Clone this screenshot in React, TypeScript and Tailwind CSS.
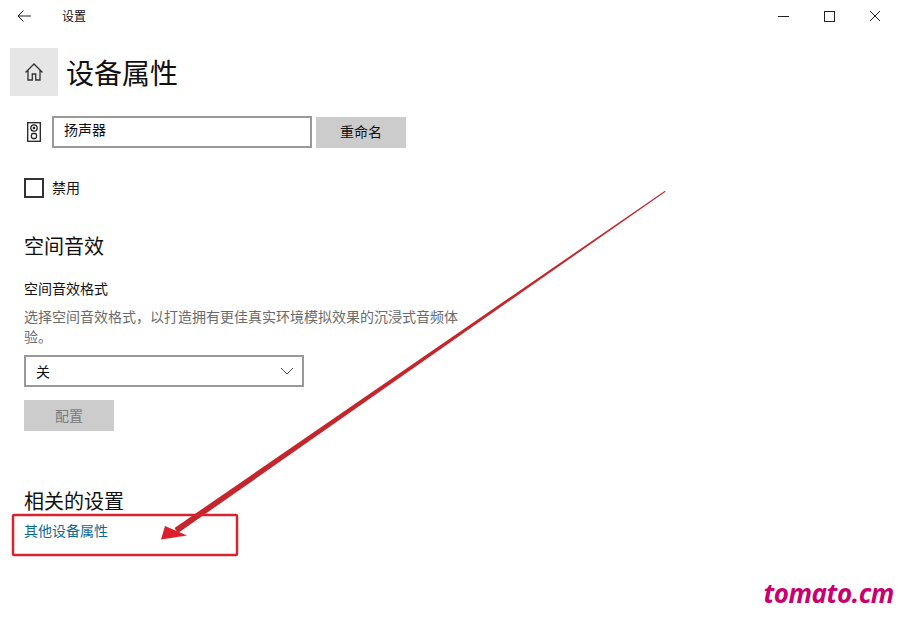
function BackIcon() {
  return (
    <svg width="16" height="16" viewBox="0 0 16 16" fill="none" stroke="#222" strokeWidth="1">
      <path d="M2 8h13M7.500 2.500 2 8l5.500 5.500" />
    </svg>
  )
}

function HomeIcon() {
  return (
    <svg width="20" height="20" viewBox="0 0 20 20" fill="none" stroke="#333" strokeWidth="1.300">
      <path d="M1.500 10.500 10 2l8.500 8.500M4 8v10h4.300v-6h3.400v6H16V8" />
    </svg>
  )
}

function SpeakerIcon() {
  return (
    <svg width="14" height="20" viewBox="0 0 14 20" fill="none" stroke="#222" strokeWidth="1.300">
      <rect x="0.700" y="0.700" width="12.600" height="18.600" />
      <circle cx="7" cy="6" r="3.200" />
      <circle cx="7" cy="6" r="0.700" />
      <rect x="4.500" y="11.500" width="5" height="5" rx="1.500" />
    </svg>
  )
}

function Annotation() {
  return (
    <svg className="absolute inset-0" width="898" height="620" viewBox="0 0 898 620" fill="none">
      <path d="M665.500 191.700 178 533l-3.500-5L665 190.800Z" fill="#c4262c" />
      <path d="M161 539.500 165 526l22 9.500Z" fill="#dc1f2b" />
      <rect x="13" y="515" width="224" height="40" rx="1" stroke="#d8242f" strokeWidth="2.500" />
    </svg>
  )
}

function App() {
  return (
    <div className="relative w-[898px] h-[620px] overflow-hidden bg-white text-[#111] font-['Noto_Sans_CJK_SC','Noto_Sans',sans-serif]">
      {/* title bar */}
      <div className="flex items-center h-8 pl-4">
        <BackIcon />
        <span className="ml-[30px] text-xs">设置</span>
        <div className="ml-auto flex items-center">
          <div className="w-[46px] flex justify-center">
            <div className="w-[11px] h-px bg-[#222]" />
          </div>
          <div className="w-[46px] flex justify-center">
            <div className="w-[11px] h-[11px] border border-[#222]" />
          </div>
          <div className="w-[46px] flex justify-center">
            <svg width="12" height="12" viewBox="0 0 12 12" stroke="#222" strokeWidth="1">
              <path d="M1 1l10 10M11 1 1 11" />
            </svg>
          </div>
        </div>
      </div>

      {/* page header */}
      <div className="flex items-center mt-4 ml-2.5">
        <div className="flex items-center justify-center w-12 h-12 bg-[#e6e6e6]">
          <HomeIcon />
        </div>
        <h1 className="ml-2 text-[28px] leading-none">设备属性</h1>
      </div>

      {/* rename */}
      <div className="flex items-center mt-5 ml-[27px]">
        <SpeakerIcon />
        <div className="flex items-center w-[260px] h-8 ml-[11px] pl-2.5 pb-1.5 border-2 border-[#999] text-sm">扬声器</div>
        <div className="flex items-center justify-center w-[90px] h-[31px] ml-1 pb-0.5 bg-[#ccc] text-sm">重命名</div>
      </div>

      <div className="flex items-center h-5 mt-[30px] ml-6">
        <div className="w-5 h-5 border-2 border-[#333]" />
        <span className="ml-2 text-sm leading-4 pb-0.5">禁用</span>
      </div>

      {/* spatial sound */}
      <div className="mt-[34px] ml-6">
        <h2 className="text-xl leading-7">空间音效</h2>
        <div className="mt-[18px] text-sm leading-5">空间音效格式</div>
        <p className="mt-2 w-[436px] text-sm leading-5 text-[#6b6b6b]">
          选择空间音效格式，以打造拥有更佳真实环境模拟效果的沉浸式音频体验。
        </p>
        <div className="flex items-center justify-between w-[280px] h-8 mt-[9px] pl-2.5 pr-2 border-2 border-[#999] text-sm">
          <span>关</span>
          <svg width="14" height="8" viewBox="0 0 14 8" fill="none" stroke="#555" strokeWidth="1">
            <path d="M1 1l6 6 6-6" />
          </svg>
        </div>
        <div className="flex items-center justify-center w-[90px] h-[31px] mt-[13px] pb-0.5 bg-[#ccc] text-sm text-[#7a7a7a]">配置</div>
      </div>

      {/* related settings */}
      <div className="mt-[56px] ml-6">
        <h2 className="text-xl leading-7">相关的设置</h2>
        <a className="block mt-[5px] text-sm leading-5 text-[#0b6a94]">其他设备属性</a>
      </div>

      <Annotation />

      <div className="absolute right-[4px] bottom-[11px] text-[26px] leading-8 tracking-[-0.4px] font-bold italic text-[#c9006f] font-['Open_Sans',sans-serif]">
        tomato.cm
      </div>
    </div>
  )
}

export default App
